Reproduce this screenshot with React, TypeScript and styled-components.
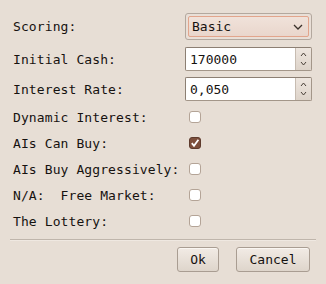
import React from "react";
import styled, { createGlobalStyle } from "styled-components";

const GlobalStyle = createGlobalStyle`
  html, body {
    margin: 0;
    padding: 0;
    background: #e7ded5;
  }
  body {
    font-family: "DejaVu Sans Mono", "Liberation Mono", monospace;
    font-size: 13px;
    color: #161210;
  }
`;

const Dialog = styled.div`
  width: 326px;
  height: 284px;
  box-sizing: border-box;
  padding: 13px 14px 0 13px;
  display: flex;
  flex-direction: column;
`;

const Row = styled.div<{ $h: number; $gap?: number }>`
  display: grid;
  grid-template-columns: 172px 1fr;
  align-items: center;
  height: ${(p) => p.$h}px;
  margin-bottom: ${(p) => p.$gap ?? 0}px;
`;

const Label = styled.span`
  white-space: pre;
  letter-spacing: 0.1px;
`;

const Select = styled.div`
  height: 27px;
  box-sizing: border-box;
  border: 1px solid #b3a89e;
  border-radius: 3px;
  padding: 2px;
  background: #e9dfd7;
`;

const SelectInner = styled.div`
  height: 100%;
  box-sizing: border-box;
  border: 1px solid #e2a58c;
  border-radius: 2px;
  background: linear-gradient(#f0e2da, #e9d6cc);
  display: flex;
  align-items: center;
  justify-content: space-between;
  padding: 0 5px 0 3px;
`;

const Spin = styled.div`
  height: 24px;
  box-sizing: border-box;
  display: flex;
  border: 1px solid #a39689;
  border-top-color: #8c7f73;
  border-left-color: #8c7f73;
  border-radius: 2px;
  overflow: hidden;
`;

const SpinText = styled.div`
  flex: 1;
  background: #ffffff;
  display: flex;
  align-items: center;
  padding-left: 4px;
`;

const SpinButtons = styled.div`
  width: 15px;
  border-left: 1px solid #c7bcb1;
  background: linear-gradient(#eee6df, #ddd3c9);
  display: flex;
  flex-direction: column;
  align-items: center;
  justify-content: space-evenly;
`;

const Box = styled.div<{ $on?: boolean }>`
  width: 12px;
  height: 12px;
  box-sizing: border-box;
  margin-left: 4px;
  border: 1px solid ${(p) => (p.$on ? "#5e3b2d" : "#b4a497")};
  border-radius: 3px;
  background: ${(p) => (p.$on ? "#7d4f3c" : "#ffffff")};
  display: flex;
  align-items: center;
  justify-content: center;
`;

const Separator = styled.div`
  height: 1px;
  background: #bfb5ab;
  border-bottom: 1px solid #efe8e1;
  margin: 5px -4px 0 -3px;
`;

const Buttons = styled.div`
  display: flex;
  justify-content: flex-end;
  gap: 17px;
  margin-top: 6px;
  padding-right: 2px;
`;

const Button = styled.button<{ $w: number }>`
  width: ${(p) => p.$w}px;
  height: 25px;
  font: inherit;
  color: inherit;
  padding: 0;
  border: 1px solid #a99d92;
  border-radius: 3px;
  background: linear-gradient(#f2ebe5, #ded5cb);
  box-shadow: inset 0 1px 0 #faf6f2;
`;

const Chevron = () => (
  <svg width="10" height="6" viewBox="0 0 10 6">
    <path d="M1 1 L5 5 L9 1" stroke="#3a302a" strokeWidth="1.3" fill="none" />
  </svg>
);

const Arrows = () => (
  <>
    <svg width="7" height="5" viewBox="0 0 7 5">
      <path d="M1 4 L3.5 1 L6 4" stroke="#4a4038" strokeWidth="1" fill="none" />
    </svg>
    <svg width="7" height="5" viewBox="0 0 7 5">
      <path d="M1 1 L3.5 4 L6 1" stroke="#4a4038" strokeWidth="1" fill="none" />
    </svg>
  </>
);

const Tick = () => (
  <svg width="10" height="10" viewBox="0 0 10 10">
    <path d="M1.8 5.2 L4 7.8 L8.4 1.8" stroke="#ffffff" strokeWidth="1.8" fill="none" />
  </svg>
);

const checks = [
  { label: "Dynamic Interest:", on: false },
  { label: "AIs Can Buy:", on: true },
  { label: "AIs Buy Aggressively:", on: false },
  { label: "N/A:  Free Market:", on: false },
  { label: "The Lottery:", on: false },
];

export default function App() {
  return (
    <>
      <GlobalStyle />
      <Dialog>
        <Row $h={27} $gap={7}>
          <Label>Scoring:</Label>
          <Select>
            <SelectInner>
              <span>Basic</span>
              <Chevron />
            </SelectInner>
          </Select>
        </Row>
        <Row $h={24} $gap={6}>
          <Label>Initial Cash:</Label>
          <Spin>
            <SpinText>170000</SpinText>
            <SpinButtons>
              <Arrows />
            </SpinButtons>
          </Spin>
        </Row>
        <Row $h={24} $gap={3}>
          <Label>Interest Rate:</Label>
          <Spin>
            <SpinText>0,050</SpinText>
            <SpinButtons>
              <Arrows />
            </SpinButtons>
          </Spin>
        </Row>
        {checks.map((c) => (
          <Row key={c.label} $h={26}>
            <Label>{c.label}</Label>
            <Box $on={c.on}>{c.on && <Tick />}</Box>
          </Row>
        ))}
        <Separator />
        <Buttons>
          <Button $w={42}>Ok</Button>
          <Button $w={74}>Cancel</Button>
        </Buttons>
      </Dialog>
    </>
  );
}
